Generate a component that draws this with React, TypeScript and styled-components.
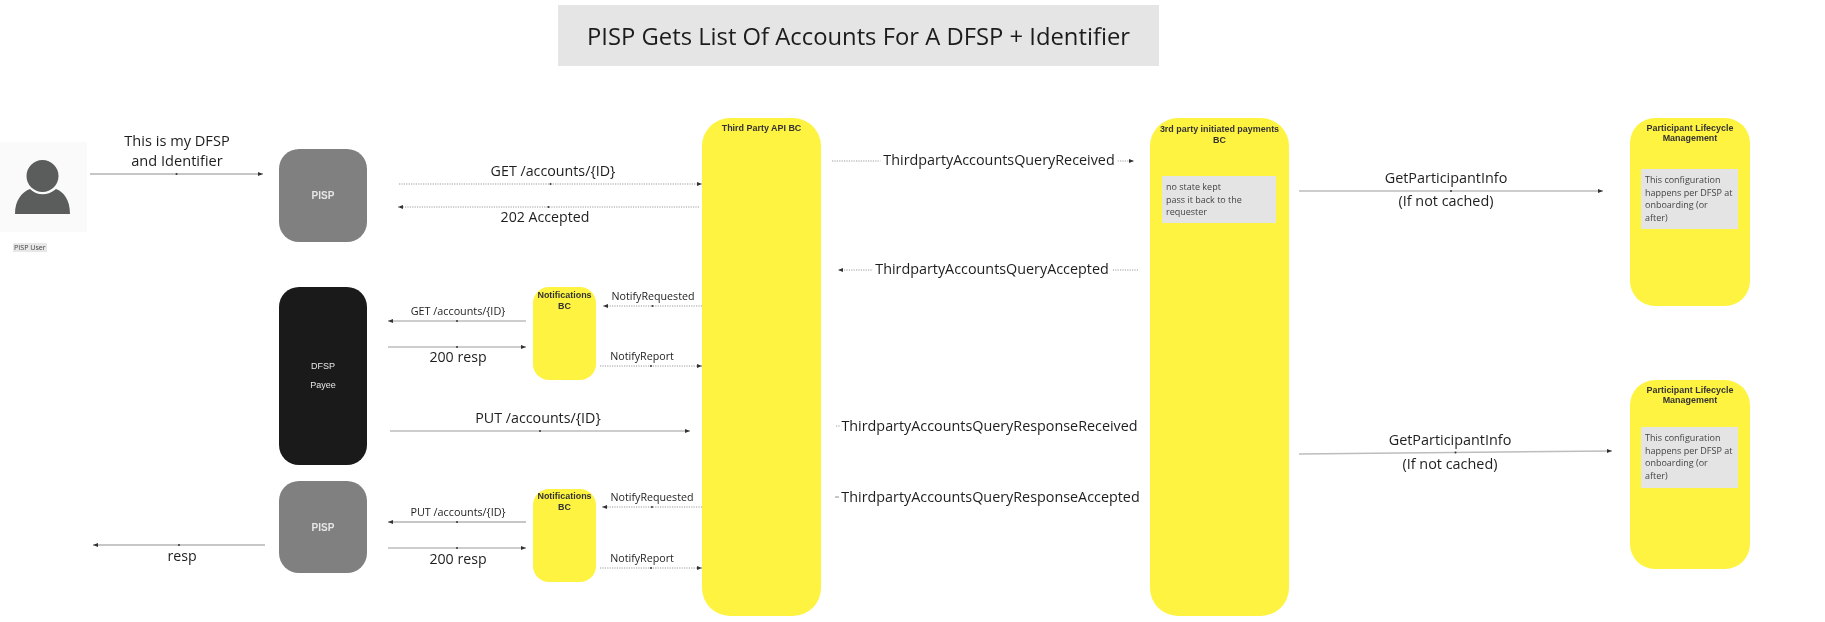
import React from 'react';
import styled, { createGlobalStyle } from 'styled-components';

const Global = createGlobalStyle`
  html, body { margin: 0; padding: 0; background: #fff; }
  #root { width: 1825px; height: 622px; }
`;

const Canvas = styled.div`
  position: relative;
  width: 1825px;
  height: 622px;
  overflow: hidden;
  background: #fff;
  font-family: "Open Sans", "Noto Sans", sans-serif;
  filter: blur(0.25px);
`;

const TitleBar = styled.h1`
  position: absolute;
  left: 558px;
  top: 5px;
  width: 601px;
  height: 61px;
  margin: 0;
  display: flex;
  align-items: center;
  justify-content: center;
  background: #e5e5e5;
  color: #1c1c1c;
  font-size: 23.8px;
  font-weight: 400;
`;

type Box = { $x: number; $y: number; $w: number; $h: number; $r?: number };

const Block = styled.div<Box>`
  position: absolute;
  left: ${p => p.$x}px;
  top: ${p => p.$y}px;
  width: ${p => p.$w}px;
  height: ${p => p.$h}px;
  border-radius: ${p => p.$r ?? 20}px;
`;

const ActorBlock = styled(Block)<{ $bg: string }>`
  display: flex;
  flex-direction: column;
  align-items: center;
  justify-content: center;
  gap: 8px;
  background: ${p => p.$bg};
  color: #e6e6e6;
  font-family: "Liberation Sans", Arial, sans-serif;
  font-size: 9px;
  line-height: 11px;
`;

const ActorName = styled.b`
  font-size: 10px;
`;

const BcBlock = styled(Block)<{ $pad: number; $lh: number }>`
  padding-top: ${p => p.$pad}px;
  box-sizing: border-box;
  background: #fff342;
  color: #333;
  font-family: "Liberation Sans", Arial, sans-serif;
  font-size: 8.95px;
  font-weight: 700;
  line-height: ${p => p.$lh}px;
  text-align: center;
  white-space: pre-line;
`;

const Note = styled(Block)`
  padding: 5px 4px;
  box-sizing: border-box;
  background: #e4e4e4;
  border-radius: 0;
  color: #444;
  font-size: 9px;
  line-height: 12.7px;
  white-space: pre-line;
`;

const UserTile = styled(Block)`
  background: #fafafa;
  border-radius: 0;
`;

const UserCaption = styled.span`
  position: absolute;
  left: 13px;
  top: 243px;
  padding: 0 1px;
  background: #e8e8e8;
  color: #444;
  font-size: 7.1px;
  line-height: 9px;
`;

const Wires = styled.svg`
  position: absolute;
  left: 0;
  top: 0;
`;

const Label = styled.div<{ $cx: number; $cy: number; $size: number; $clear?: boolean }>`
  position: absolute;
  left: ${p => p.$cx}px;
  top: ${p => p.$cy}px;
  transform: translate(-50%, -50%);
  padding: ${p => (p.$clear ? '0 3px' : '0')};
  background: ${p => (p.$clear ? '#fff' : 'transparent')};
  color: #1e1e1e;
  font-size: ${p => p.$size}px;
  line-height: 1.35;
  text-align: center;
  white-space: pre;
`;

type Wire = { x1: number; y1: number; x2: number; y2: number; dotted?: boolean; heavy?: boolean; noHead?: boolean; noDot?: boolean };

const wires: Wire[] = [
  { x1: 90, y1: 174, x2: 263, y2: 174 },
  { x1: 399, y1: 184, x2: 702, y2: 184, dotted: true },
  { x1: 699, y1: 207, x2: 398, y2: 207, dotted: true },
  { x1: 526, y1: 321, x2: 388, y2: 321, heavy: true },
  { x1: 388, y1: 347, x2: 526, y2: 347, heavy: true },
  { x1: 702, y1: 306, x2: 603, y2: 306, dotted: true },
  { x1: 600, y1: 366, x2: 702, y2: 366, dotted: true },
  { x1: 390, y1: 431, x2: 690, y2: 431, heavy: true },
  { x1: 526, y1: 522, x2: 388, y2: 522 },
  { x1: 388, y1: 548, x2: 526, y2: 548, heavy: true },
  { x1: 702, y1: 507, x2: 602, y2: 507, dotted: true },
  { x1: 600, y1: 568, x2: 702, y2: 568, dotted: true },
  { x1: 265, y1: 545, x2: 93, y2: 545 },
  { x1: 832, y1: 161, x2: 1134, y2: 161, dotted: true, noDot: true },
  { x1: 1138, y1: 270, x2: 838, y2: 270, dotted: true, noDot: true },
  { x1: 836, y1: 426, x2: 840, y2: 426, dotted: true, noHead: true, noDot: true },
  { x1: 835, y1: 497, x2: 839, y2: 497, noHead: true, noDot: true },
  { x1: 1299, y1: 191, x2: 1603, y2: 191, heavy: true },
  { x1: 1299, y1: 454, x2: 1612, y2: 451, heavy: true },
];

const labels: { t: string; cx: number; cy: number; s: number; clear?: boolean }[] = [
  { t: 'This is my DFSP\nand Identifier', cx: 177, cy: 151, s: 14.6 },
  { t: 'GET /accounts/{ID}', cx: 553, cy: 171, s: 14.25 },
  { t: '202 Accepted', cx: 545, cy: 217, s: 14.2 },
  { t: 'GET /accounts/{ID}', cx: 458, cy: 311, s: 10.8 },
  { t: '200 resp', cx: 458, cy: 357, s: 14.2 },
  { t: 'NotifyRequested', cx: 653, cy: 296, s: 10.7 },
  { t: 'NotifyReport', cx: 642, cy: 356, s: 10.7 },
  { t: 'PUT /accounts/{ID}', cx: 538, cy: 418, s: 14.25 },
  { t: 'PUT /accounts/{ID}', cx: 458, cy: 512, s: 10.8 },
  { t: '200 resp', cx: 458, cy: 559, s: 14.2 },
  { t: 'NotifyRequested', cx: 652, cy: 497, s: 10.7 },
  { t: 'NotifyReport', cx: 642, cy: 558, s: 10.7 },
  { t: 'resp', cx: 182, cy: 556, s: 14.2 },
  { t: 'ThirdpartyAccountsQueryReceived', cx: 999, cy: 160, s: 14.35, clear: true },
  { t: 'ThirdpartyAccountsQueryAccepted', cx: 992, cy: 269, s: 14.35, clear: true },
  { t: 'ThirdpartyAccountsQueryResponseReceived', cx: 989.5, cy: 426, s: 14.35 },
  { t: 'ThirdpartyAccountsQueryResponseAccepted', cx: 990.5, cy: 497, s: 14.35 },
  { t: 'GetParticipantInfo', cx: 1446, cy: 178, s: 14.4 },
  { t: '(If not cached)', cx: 1446, cy: 201, s: 14.4 },
  { t: 'GetParticipantInfo', cx: 1450, cy: 440, s: 14.4 },
  { t: '(If not cached)', cx: 1450, cy: 464, s: 14.4 },
];

const configNote = 'This configuration\nhappens per DFSP at\nonboarding (or\nafter)';

function WireLine({ x1, y1, x2, y2, dotted, heavy, noHead, noDot }: Wire) {
  const a = Math.atan2(y2 - y1, x2 - x1);
  const c = Math.cos(a);
  const s = Math.sin(a);
  const head = [
    [x2, y2],
    [x2 - 5 * c + 2 * s, y2 - 5 * s - 2 * c],
    [x2 - 5 * c - 2 * s, y2 - 5 * s + 2 * c],
  ]
    .map(p => p.join(','))
    .join(' ');
  return (
    <g>
      <line
        x1={x1}
        y1={y1}
        x2={x2}
        y2={y2}
        stroke={dotted ? '#9a9a9a' : heavy ? '#bdbdbd' : '#8e8e8e'}
        strokeWidth={heavy ? 1.5 : 1}
        strokeDasharray={dotted ? '1.2 1.2' : undefined}
      />
      {!noDot && <circle cx={(x1 + x2) / 2} cy={(y1 + y2) / 2} r={1} fill="#333" />}
      {!noHead && <polygon points={head} fill="#333" />}
    </g>
  );
}

export default function App() {
  return (
    <Canvas>
      <Global />
      <TitleBar>PISP Gets List Of Accounts For A DFSP + Identifier</TitleBar>

      <UserTile $x={0} $y={142} $w={87} $h={90}>
        <svg width="87" height="90" viewBox="0 0 87 90">
          <path d="M15 72 C15 58 22 50 30 47 C37 54 48 54 56 47 C64 50 70 58 70 72 Z" fill="#5b5d5c" />
          <circle cx="42.5" cy="34" r="16" fill="#5b5d5c" />
        </svg>
      </UserTile>
      <UserCaption>PISP User</UserCaption>

      <ActorBlock $x={279} $y={149} $w={88} $h={93} $bg="#808080">
        <ActorName>PISP</ActorName>
      </ActorBlock>
      <ActorBlock $x={279} $y={287} $w={88} $h={178} $bg="#1a1a1a">
        <span>DFSP</span>
        <span>Payee</span>
      </ActorBlock>
      <ActorBlock $x={279} $y={481} $w={88} $h={92} $bg="#808080">
        <ActorName>PISP</ActorName>
      </ActorBlock>

      <BcBlock $x={533} $y={287} $w={63} $h={93} $r={16} $pad={3} $lh={10.5}>
        {'Notifications\nBC'}
      </BcBlock>
      <BcBlock $x={533} $y={489} $w={63} $h={93} $r={16} $pad={2} $lh={10.5}>
        {'Notifications\nBC'}
      </BcBlock>
      <BcBlock $x={702} $y={118} $w={119} $h={498} $r={28} $pad={5} $lh={10.5}>
        Third Party API BC
      </BcBlock>
      <BcBlock $x={1150} $y={118} $w={139} $h={498} $r={28} $pad={6} $lh={10.5}>
        {'3rd party initiated payments\nBC'}
      </BcBlock>
      <BcBlock $x={1630} $y={118} $w={120} $h={188} $r={25} $pad={5} $lh={10}>
        {'Participant Lifecycle\nManagement'}
      </BcBlock>
      <BcBlock $x={1630} $y={380} $w={120} $h={189} $r={25} $pad={6} $lh={9.5}>
        {'Participant Lifecycle\nManagement'}
      </BcBlock>

      <Note $x={1162} $y={176} $w={114} $h={47}>
        {'no state kept\npass it back to the\nrequester'}
      </Note>
      <Note $x={1641} $y={169} $w={97} $h={60}>
        {configNote}
      </Note>
      <Note $x={1641} $y={427} $w={97} $h={61}>
        {configNote}
      </Note>

      <Wires width="1825" height="622" viewBox="0 0 1825 622">
        {wires.map((w, i) => (
          <WireLine key={i} {...w} />
        ))}
      </Wires>

      {labels.map((l, i) => (
        <Label key={i} $cx={l.cx} $cy={l.cy} $size={l.s} $clear={l.clear}>
          {l.t}
        </Label>
      ))}
    </Canvas>
  );
}
